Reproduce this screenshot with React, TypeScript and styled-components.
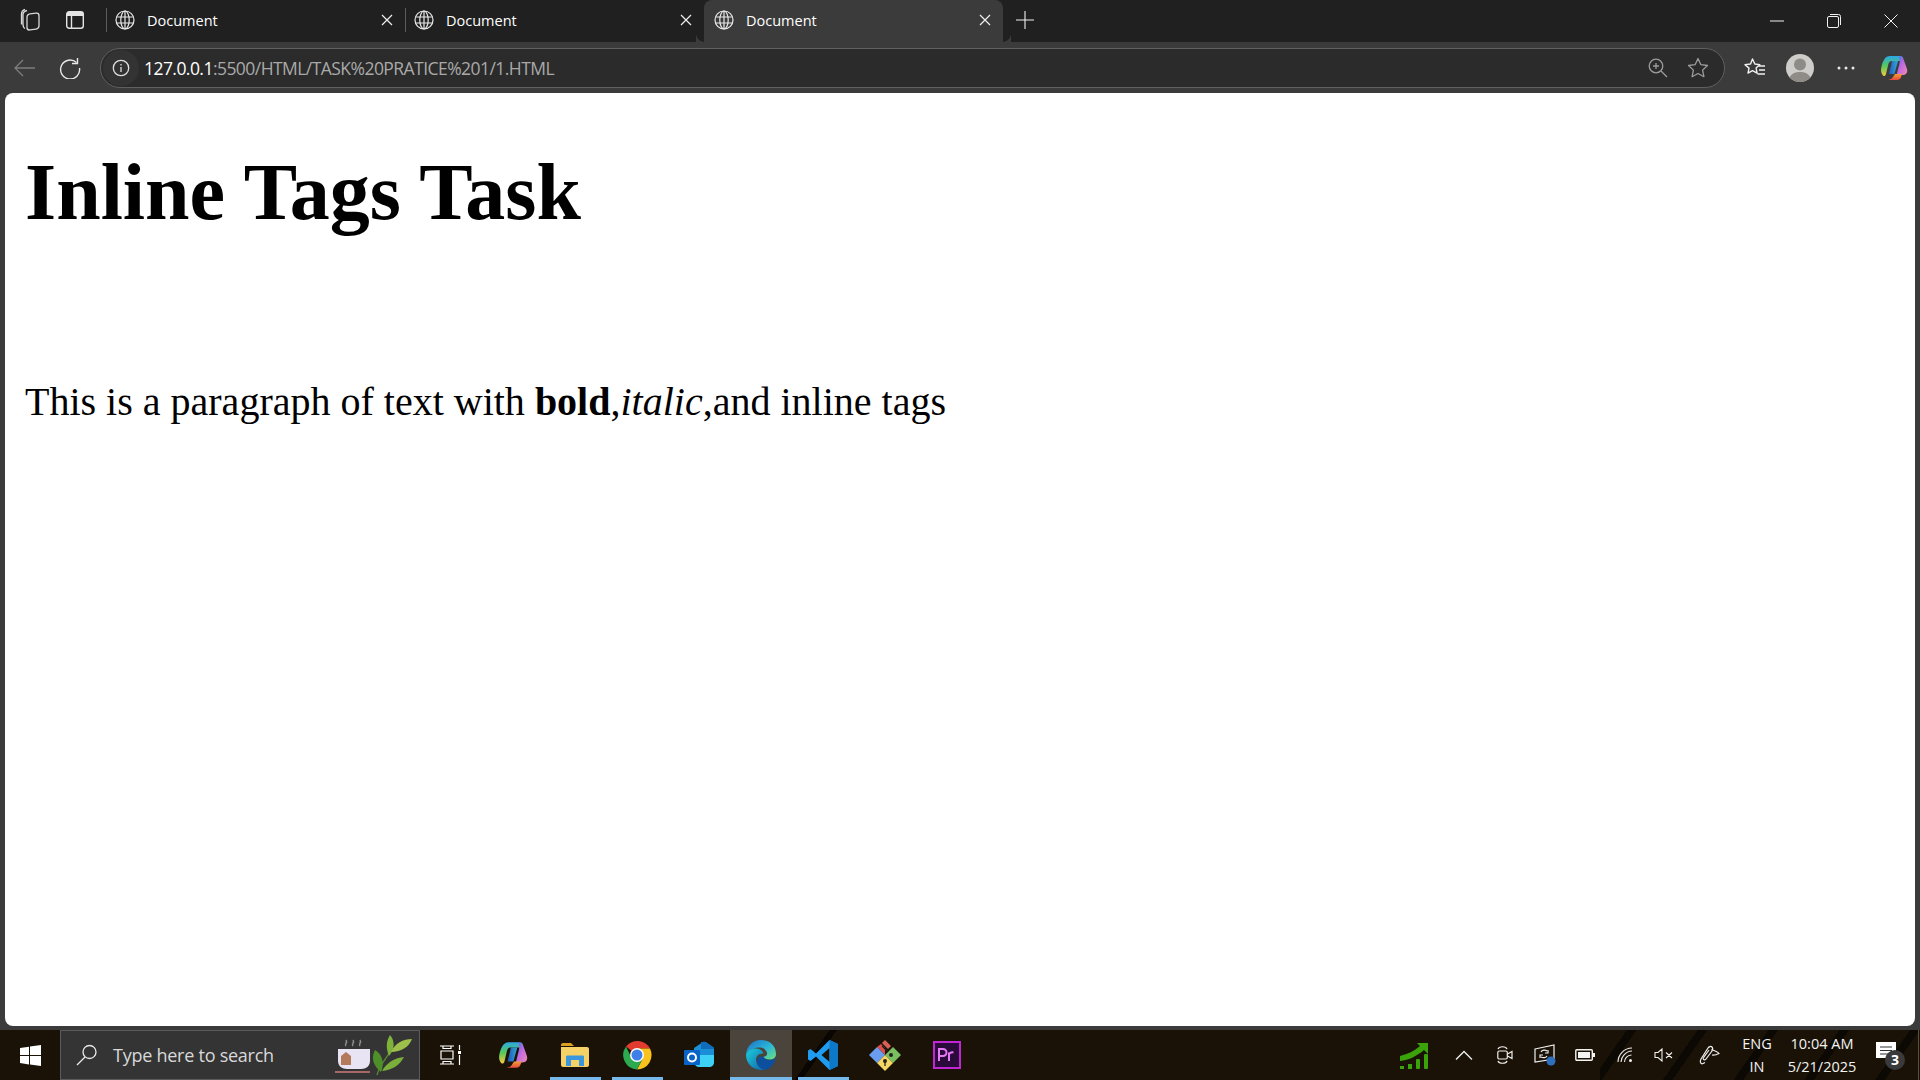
import React from "react";
import styled, { createGlobalStyle } from "styled-components";

const Global = createGlobalStyle`
  html, body { margin: 0; padding: 0; width: 1920px; height: 1080px; overflow: hidden; background: #3b3b3b; }
  * { box-sizing: border-box; }
`;
const Screen = styled.div`
  width: 1920px; height: 1080px; display: flex; flex-direction: column; background: #3b3b3b;
  font-family: "Open Sans", "Noto Sans", sans-serif; color: #fff; overflow: hidden;
`;
const TabStrip = styled.div`
  height: 42px; background: #202020; display: flex; align-items: flex-start; flex: none; padding-left: 8px;
`;
const StripButton = styled.div<{ $w: number }>`
  width: ${(p) => p.$w}px; height: 40px; display: flex; align-items: center; justify-content: center; flex: none;
`;
const Tab = styled.div<{ $active?: boolean; $sep?: boolean }>`
  position: relative; width: 299px; height: ${(p) => (p.$active ? 42 : 40)}px; flex: none; display: flex; align-items: center;
  padding: ${(p) => (p.$active ? "0 12px 2px 10px" : "0 12px 0 9px")};
  gap: 12px; font-size: 14.5px; color: #fff;
  background: ${(p) => (p.$active ? "#3b3b3b" : "transparent")};
  border-radius: ${(p) => (p.$active ? "8px 8px 0 0" : "0")};
  ${(p) => p.$sep && `&::before { content: ""; position: absolute; left: 0; top: 8px; bottom: 8px; width: 1px; background: #5c5c5c; }`}
  ${(p) => p.$active && `
    &::before, &::after { content: ""; position: absolute; bottom: 0; width: 8px; height: 8px; background: radial-gradient(circle at 0 0, #202020 7.5px, #3b3b3b 8px); }
    &::before { left: -8px; transform: scaleX(-1); }
    &::after { right: -8px; }
  `}
`;
const TabTitle = styled.span` flex: 1; `;
const NewTab = styled.div`
  width: 44px; height: 40px; display: flex; align-items: center; justify-content: center; flex: none;
`;
const StripSpacer = styled.div` flex: 1; `;
const WinButton = styled.div<{ $w: number }>`
  width: ${(p) => p.$w}px; height: 42px; display: flex; align-items: center; justify-content: center; flex: none;
`;
const Toolbar = styled.div`
  height: 51px; flex: none; display: flex; align-items: center; background: #3b3b3b; padding: 1px 0 0 0;
`;
const NavSlot = styled.div<{ $w: number }>`
  width: ${(p) => p.$w}px; height: 40px; display: flex; align-items: center; justify-content: center; flex: none;
`;
const AddressBar = styled.div`
  width: 1625px; height: 40px; flex: none; border: 1px solid #606060; border-radius: 20px; background: #2b2b2b;
  display: flex; align-items: center; padding: 0 6px 0 1px; margin-left: 2px; margin-right: 8px;
`;
const InfoPill = styled.div`
  width: 36px; height: 36px; border-radius: 18px; background: #333; display: flex; align-items: center; justify-content: center; flex: none; margin-left: 1px;
`;
const Url = styled.div`
  flex: 1; padding-left: 5px; font-size: 17.5px; letter-spacing: -0.55px; color: #a9a9a9; white-space: nowrap;
`;
const UrlHost = styled.span` color: #fff; `;
const BarIcon = styled.div`
  width: 40px; height: 36px; display: flex; align-items: center; justify-content: center; flex: none;
`;
const Viewport = styled.main`
  flex: none; height: 933px; margin: 0 5px; background: #fff; border-radius: 8px; overflow: hidden;
  color: #000; font-family: "Liberation Serif", "Times New Roman", serif; padding: 0 20px; display: flow-root;
`;
const Heading = styled.h1`
  font-size: 80px; font-weight: bold; margin: 53.6px 0;
`;
const Paragraph = styled.p`
  font-size: 40px; margin: 140px 0 40px;
`;
const Taskbar = styled.footer`
  margin-top: 4px; height: 50px; flex: none; display: flex; align-items: stretch; color: #fff;
  background:
    linear-gradient(128deg, transparent 0 86%, rgba(0,0,0,.0) 86%),
    repeating-linear-gradient(125deg, rgba(0,0,0,0) 0 22px, rgba(0,0,0,.55) 22px 30px, rgba(0,0,0,0) 30px 58px) 1600px 0 / 320px 50px no-repeat,
    repeating-linear-gradient(125deg, rgba(0,0,0,0) 0 30px, rgba(0,0,0,.7) 30px 36px, rgba(0,0,0,0) 36px 70px) 793px 0 / 70px 50px no-repeat,
    #1a1206;
`;
const StartSlot = styled.div`
  width: 60px; flex: none; display: flex; align-items: center; justify-content: center;
`;
const SearchBox = styled.div`
  width: 360px; flex: none; background: #343434; border: 1px solid #5b5b5b; display: flex; align-items: center; padding-left: 15px;
`;
const SearchText = styled.span`
  font-size: 18px; color: #d8d8d8; margin-left: 15px; letter-spacing: -0.25px; flex: 1; white-space: nowrap;
`;
const TaskItem = styled.div<{ $active?: boolean; $open?: boolean }>`
  position: relative; width: 62px; flex: none; display: flex; align-items: center; justify-content: center;
  background: ${(p) => (p.$active ? "#4a443c" : "transparent")};
  ${(p) => p.$open && `&::after { content: ""; position: absolute; bottom: 0; height: 3px; left: ${p.$active ? 0 : 6}px; right: ${p.$active ? 0 : 5}px; background: #76b9ed; }`}
`;
const TaskSpacer = styled.div` flex: 1; `;
const TrayItem = styled.div<{ $w: number }>`
  width: ${(p) => p.$w}px; flex: none; display: flex; align-items: center; justify-content: center;
`;
const TrayStack = styled.div<{ $w: number }>`
  width: ${(p) => p.$w}px; flex: none; display: flex; flex-direction: column; align-items: center; justify-content: center;
  gap: 3px; font-size: 14.5px; line-height: 20px; color: #f2f2f2; white-space: nowrap;
`;
const ShowDesktop = styled.div`
  width: 1px; margin-left: 4px; margin-right: 1px; background: #5a5040; flex: none;
`;

const S = { fill: "none", stroke: "currentColor", strokeWidth: 1.3 } as const;

const Globe = () => (
  <svg width="20" height="20" viewBox="0 0 20 20" fill="none" stroke="#e8e8e8" strokeWidth="1.2">
    <circle cx="10" cy="10" r="9" />
    <ellipse cx="10" cy="10" rx="4.2" ry="9" />
    <path d="M10 1v18M1.6 7h16.8M1.6 13h16.8" />
  </svg>
);
const CloseX = ({ s = 12 }: { s?: number }) => (
  <svg width={s} height={s} viewBox="0 0 12 12" stroke="#f0f0f0" strokeWidth="1.2"><path d="M1 1l10 10M11 1L1 11" /></svg>
);
const Copilot = ({ s = 28 }: { s?: number }) => (
  <svg width={s} height={s} viewBox="0 0 28 28">
    <defs>
      <linearGradient id="cp1" x1="0" y1="0" x2="0" y2="1"><stop offset="0" stopColor="#2aa8e8" /><stop offset=".5" stopColor="#58c85a" /><stop offset="1" stopColor="#f7c93e" /></linearGradient>
      <linearGradient id="cp2" x1="0" y1="0" x2="1" y2="1"><stop offset="0" stopColor="#3f6fe0" /><stop offset=".5" stopColor="#c56ae0" /><stop offset="1" stopColor="#f08ab0" /></linearGradient>
      <linearGradient id="cp3" x1="0" y1="0" x2="0" y2="1"><stop offset="0" stopColor="#f0a030" /><stop offset="1" stopColor="#e8483c" /></linearGradient>
      <linearGradient id="cp4" x1="0" y1="0" x2="1" y2="0"><stop offset="0" stopColor="#1b5fd0" /><stop offset="1" stopColor="#36b5e8" /></linearGradient>
    </defs>
    <path d="M10 2h10c2 0 3 1 3.4 2.6L20 7H12c-2 0-3 1-3.6 3L6 20c-.5 2-2 2.6-3 1.4C.8 19 .6 16 1.6 12 3 7 5 2 10 2z" fill="url(#cp1)" />
    <path d="M19 2.4c2.2-.6 3.8.6 4.6 3L27 15c1 3.6-1 6-4 6h-6.4l3-12c.4-2.400-.2-4.800-.6-6.600z" fill="url(#cp2)" />
    <path d="M8 26h9c2.500 0 3.600-1.500 4.200-3.500L22 20h-7l-2 3c-1 1.800-3 2.600-5 3z" fill="url(#cp3)" />
    <path d="M12 7h6l-3.600 13H9z" fill="url(#cp4)" opacity=".9" />
  </svg>
);

export default function App() {
  return (
    <Screen>
      <Global />
      <TabStrip>
        <StripButton $w={44}>
          <svg width="22" height="24" viewBox="0 0 22 24" {...S} stroke="#d8d8d8">
            <rect x="8" y="5" width="12" height="16" rx="3" transform="skewY(-8) translate(0 2.500)" />
            <path d="M6 20.500C4 19.500 4 18 4 16V6.500C4 4.500 6 3 8 2.500M2.500 16.500V6C2.500 4 4 2 6 1.300" />
          </svg>
        </StripButton>
        <StripButton $w={45}>
          <svg width="18" height="18" viewBox="0 0 18 18" fill="none" stroke="#e4e4e4" strokeWidth="1.4">
            <rect x=".7" y=".7" width="16.600" height="16.600" rx="2.500" />
            <path d="M1 1h16v4H1z" fill="#e4e4e4" stroke="none" />
            <path d="M5.500 5v12" />
          </svg>
        </StripButton>
        <StripButton $w={9} />
        <Tab $sep><Globe /><TabTitle>Document</TabTitle><CloseX /></Tab>
        <Tab $sep><Globe /><TabTitle>Document</TabTitle><CloseX /></Tab>
        <Tab $active><Globe /><TabTitle>Document</TabTitle><CloseX /></Tab>
        <NewTab>
          <svg width="18" height="18" viewBox="0 0 18 18" stroke="#f0f0f0" strokeWidth="1.1"><path d="M9 0v18M0 9h18" /></svg>
        </NewTab>
        <StripSpacer />
        <WinButton $w={57}>
          <svg width="14" height="2" viewBox="0 0 14 2"><path d="M0 1h14" stroke="#f0f0f0" strokeWidth="1" /></svg>
        </WinButton>
        <WinButton $w={57}>
          <svg width="14" height="14" viewBox="0 0 14 14" fill="none" stroke="#f0f0f0" strokeWidth="1"><rect x=".5" y="2.500" width="11" height="11" rx="1.500" /><path d="M3 .5h8.500a2 2 0 0 1 2 2V11" /></svg>
        </WinButton>
        <WinButton $w={58}>
          <svg width="14" height="14" viewBox="0 0 14 14" stroke="#f0f0f0" strokeWidth="1"><path d="M.5.5l13 13M13.500.5l-13 13" /></svg>
        </WinButton>
      </TabStrip>
      <Toolbar>
        <NavSlot $w={50}>
          <svg width="22" height="18" viewBox="0 0 22 18" fill="none" stroke="#7d7d7d" strokeWidth="1.300"><path d="M21 9H1M9 1L1 9l8 8" /></svg>
        </NavSlot>
        <NavSlot $w={40}>
          <svg width="22" height="22" viewBox="0 0 22 22" fill="none" stroke="#e8e8e8" strokeWidth="1.400"><path d="M17.500 5.500A9.500 9.500 0 1 0 20.500 11" /><path d="M18.500 1v5.500H13" /></svg>
        </NavSlot>
        <NavSlot $w={8} />
        <AddressBar>
          <InfoPill>
            <svg width="18" height="18" viewBox="0 0 18 18" fill="none" stroke="#e0e0e0" strokeWidth="1.300"><circle cx="9" cy="9" r="7.700" /><path d="M9 8v5M9 5v1.400" /></svg>
          </InfoPill>
          <Url><UrlHost>127.0.0.1</UrlHost>:5500/HTML/TASK%20PRATICE%201/1.HTML</Url>
          <BarIcon>
            <svg width="20" height="20" viewBox="0 0 20 20" fill="none" stroke="#9c9c9c" strokeWidth="1.300"><circle cx="8" cy="8" r="6.800" /><path d="M13 13l6 6M8 5v6M5 8h6" /></svg>
          </BarIcon>
          <BarIcon>
            <svg width="22" height="22" viewBox="0 0 22 22" fill="none" stroke="#9c9c9c" strokeWidth="1.300" strokeLinejoin="round"><path d="M11 1.500l2.900 6.200 6.600.8-4.900 4.600 1.300 6.600L11 16.500l-5.900 3.200 1.300-6.600L1.500 8.500l6.600-.8z" /></svg>
          </BarIcon>
        </AddressBar>
        <NavSlot $w={44}>
          <svg width="22" height="22" viewBox="0 0 22 22" fill="none" stroke="#f0f0f0" strokeWidth="1.400" strokeLinejoin="round"><path d="M8.500 2l2.300 5 5 .6-3.700 3.500 1 5-4.600-2.500-4.500 2.500 1-5L1 7.600l5.500-.6zM14 9h7M15 13h6M13.500 17H21" /></svg>
        </NavSlot>
        <NavSlot $w={46}>
          <svg width="28" height="28" viewBox="0 0 28 28"><circle cx="14" cy="14" r="14" fill="#cfcdca" /><circle cx="14" cy="10.500" r="6" fill="#8f8b87" /><path d="M3.500 23.500C6 19 10 18 14 18s8 1 10.500 5.500A14 14 0 0 1 14 28 14 14 0 0 1 3.500 23.500z" fill="#8f8b87" /></svg>
        </NavSlot>
        <NavSlot $w={46}>
          <svg width="18" height="4" viewBox="0 0 18 4" fill="#e8e8e8"><circle cx="2" cy="2" r="1.500" /><circle cx="9" cy="2" r="1.500" /><circle cx="16" cy="2" r="1.500" /></svg>
        </NavSlot>
        <NavSlot $w={50}><Copilot /></NavSlot>
      </Toolbar>
      <Viewport>
        <Heading>Inline Tags Task</Heading>
        <Paragraph>This is a paragraph of text with <b>bold</b>,<i>italic</i>,and inline tags</Paragraph>
      </Viewport>
      <Taskbar>
        <StartSlot>
          <svg width="21" height="21" viewBox="0 0 21 21" fill="#fff"><path d="M0 3l9-1.300V10H0zM10 1.500L21 0v10H10zM0 11h9v8.400L0 18zM10 11h11v10l-11-1.500z" /></svg>
        </StartSlot>
        <SearchBox>
          <svg width="22" height="22" viewBox="0 0 22 22" fill="none" stroke="#e8e8e8" strokeWidth="1.300"><circle cx="13.500" cy="8" r="6.500" /><path d="M9 13l-8 8" /></svg>
          <SearchText>Type here to search</SearchText>
          <svg width="36" height="38" viewBox="0 0 36 38" fill="none">
            <path d="M11 10c-2-2 2-3 0-6M18 10c-2-2 2-3 0-6M25 10c-2-2 2-3 0-6" stroke="#8d8d8d" strokeWidth="1.500" />
            <path d="M3 13h32v12c0 5-4 8-9 8H12c-5 0-9-3-9-8z" fill="#e9e4f4" />
            <path d="M6 20l5-4 5 4v9H6z" fill="#b47a5c" />
            <path d="M0 35h35v2H0z" fill="#a86868" />
          </svg>
          <svg width="42" height="42" viewBox="0 0 42 42" fill="#6da82e">
            <path d="M6 41C9 30 16 24 20 16" stroke="#5d9030" strokeWidth="1.200" fill="none" />
            <path d="M10 38C0 30 1 22 4 16c7 4 10 13 6 22z" fill="#4f8f2a" />
            <path d="M18 22C14 12 16 6 19 1c5 6 5 14-1 21z" fill="#7fb23a" />
            <path d="M20 18C24 9 32 5 41 5c-3 8-11 13-21 13z" fill="#9cc04a" />
            <path d="M11 37C16 28 24 24 33 23c-4 8-12 13-22 14z" fill="#7ab03a" />
          </svg>
          <TrayItem $w={6} />
        </SearchBox>
        <TaskItem>
          <svg width="22" height="20" viewBox="0 0 22 20" fill="none" stroke="#fff" strokeWidth="1.200"><path d="M0 1h14M3 1v2.500h8V1M1 6h12v8H1zM0 19h14M3 19v-2.500h8V19M19.500 0v5M19.500 10v10" /><rect x="18" y="6" width="3" height="3" fill="#fff" stroke="none" /></svg>
        </TaskItem>
        <TaskItem><Copilot s={30} /></TaskItem>
        <TaskItem $open>
          <svg width="28" height="24" viewBox="0 0 28 24"><path d="M0 2c0-1 .5-2 2-2h8l3 3h-13z" fill="#d9a021" /><path d="M0 4h26c1 0 2 .7 2 2v16c0 1.300-1 2-2 2H2c-1 0-2-.7-2-2z" fill="#f6d165" /><path d="M5 23v-9c0-1 .5-1.500 1.500-1.500h15c1 0 1.500.5 1.500 1.500v9h-5v-6h-8v6z" fill="#3a96dd" /></svg>
        </TaskItem>
        <TaskItem $open>
          <svg width="30" height="30" viewBox="0 0 30 30"><path d="M15 15L4 6.500A14.500 14.500 0 0 1 28 8.500H15z" fill="#e33b2e" /><path d="M15 8.500h13A14.500 14.500 0 0 1 15 29.500L21 18z" fill="#f9c21c" /><path d="M21 18l-6 11.500A14.500 14.500 0 0 1 4 6.500L9.500 18z" fill="#2da94f" /><circle cx="15" cy="15" r="7" fill="#fff" /><circle cx="15" cy="15" r="5.500" fill="#3f7fe8" /></svg>
        </TaskItem>
        <TaskItem>
          <svg width="30" height="28" viewBox="0 0 30 28"><path d="M10 7l9-6c1-.6 2-.4 3 .2l7 4.800c.7.500 1 1 1 2v12c0 3-2 5-5 5H15c-3 0-5-2-5-5z" fill="#1a8fd8" /><path d="M17 1h4c.500 0 1 .200 1.300.400L29 6c.6.400 1 1 1 2H17z" fill="#0f6cbd" /><path d="M12 14h18v7c0 3-2 5-5 5H15c-2 0-3.500-1-4-2.500z" fill="#3dd2f5" /><rect x="0" y="9" width="16" height="15" rx="1" fill="#0a64c8" /><circle cx="8" cy="16.500" r="4" fill="none" stroke="#fff" strokeWidth="2" /></svg>
        </TaskItem>
        <TaskItem $active $open>
          <svg width="30" height="30" viewBox="0 0 30 30">
            <defs>
              <linearGradient id="ed1" x1="0" y1="0" x2="1" y2="1"><stop offset="0" stopColor="#1a6fc4" /><stop offset=".55" stopColor="#2bb6d8" /><stop offset="1" stopColor="#6fe07a" /></linearGradient>
              <linearGradient id="ed2" x1="0" y1="0" x2="1" y2="1"><stop offset="0" stopColor="#1dd0d8" /><stop offset="1" stopColor="#0d62b0" /></linearGradient>
            </defs>
            <path d="M15 0C24 0 30 6 30 14c0 4-3 5.500-6 5.500-4 0-6-1-6.500-3 3 0 4.500-2 3-5C18.500 8 15.500 7 12 7.500 7 8.200 1.500 11 0 16 0 7 6 0 15 0z" fill="url(#ed1)" />
            <path d="M0 15c2-5 7-7 11-6.500 3 .4 6 2.500 6.500 5-4 0-7.500 2-7.500 6 0 5 4 9 9 10.500C9 31 0 25 0 15z" fill="url(#ed2)" />
            <path d="M11 21c0-3 2-5 6.500-4.500C18 19 21 20 24 20c3 0 5-1 5.800-2.500C29 24 24 29 19.500 29.800 14 29 11 25 11 21z" fill="#0b4f9e" />
          </svg>
        </TaskItem>
        <TaskItem $open>
          <svg width="30" height="30" viewBox="0 0 30 30"><path d="M21.500 0L30 4v22l-8.500 4L8 16.500 2.500 21 0 19.500V10.500L2.500 9 8 13.500zM21.500 8l-8 7 8 7z" fill="#1f9cf0" /><path d="M21.500 0L30 4v22l-8.500 4z" fill="#0e78c8" /></svg>
        </TaskItem>
        <TaskItem>
          <svg width="32" height="32" viewBox="0 0 32 32"><path d="M16 16L8 8l4-3 4 4z" fill="#e0504a" /><path d="M13 4l3-3 6 6-3 3z" fill="#d96058" /><path d="M16 16l8-8 8 8-8 8z" fill="#7ac060" /><path d="M16 16l-8-8-8 8 8 8z" fill="#6a9cf0" /><path d="M16 16l8 8-8 8-8-8z" fill="#f4d664" /><circle cx="16" cy="22" r="2" fill="#222" /><circle cx="22" cy="16" r="2" fill="#222" /><path d="M16 22v5M13 7l6 6" stroke="#222" strokeWidth="1.300" /></svg>
        </TaskItem>
        <TaskItem>
          <svg width="28" height="28" viewBox="0 0 28 28"><rect x="1" y="1" width="26" height="26" fill="#2a0a3a" stroke="#c026d3" strokeWidth="2" /><path d="M6 20V8h4a3.500 3.500 0 0 1 0 7H6M16 20v-8.500M16 14c0-2 2-3 4.500-2.500" fill="none" stroke="#e879f9" strokeWidth="2" /></svg>
        </TaskItem>
        <TaskSpacer />
        <TrayItem $w={60}>
          <svg width="30" height="30" viewBox="0 0 30 30" fill="#3aa30a"><rect x="1" y="26" width="4" height="3" /><rect x="9" y="24" width="4" height="5" /><rect x="17" y="19" width="4" height="10" rx="1" /><rect x="25" y="14" width="4" height="15" rx="1" /><path d="M1 16C9 14 15 11 21 6l-3-3h11v11l-4-4C18 16 10 20 1 21z" /></svg>
        </TrayItem>
        <TrayItem $w={40}>
          <svg width="18" height="10" viewBox="0 0 18 10" fill="none" stroke="#f0f0f0" strokeWidth="1.300"><path d="M1 9.500l8-8 8 8" /></svg>
        </TrayItem>
        <TrayItem $w={42}>
          <svg width="16" height="20" viewBox="0 0 16 20" fill="none" stroke="#f0f0f0" strokeWidth="1.200"><path d="M1 4c1-3 8-3 9 0M1 16c1 3 8 3 9 0" /><rect x=".8" y="6" width="9.500" height="8" rx="1.500" /><path d="M10.500 9l4.500-2.500v7L10.500 11" /></svg>
        </TrayItem>
        <TrayItem $w={38}>
          <svg width="22" height="22" viewBox="0 0 22 22" fill="none" stroke="#f0f0f0" strokeWidth="1.200"><path d="M1 5l19-4v14l-19 3z" /><path d="M7 8c1-2 4-2.500 6-1M14 6v3h-3M13 12c-1 2-4 2-6 1M6 14v-3h3" /><circle cx="17" cy="17" r="4.500" fill="#2f6fc0" stroke="none" /></svg>
        </TrayItem>
        <TrayItem $w={42}>
          <svg width="20" height="12" viewBox="0 0 20 12"><rect x=".8" y=".8" width="16.500" height="10.400" rx="1" fill="none" stroke="#f4f4f4" strokeWidth="1.400" /><rect x="3" y="3" width="12" height="6" fill="#f4f4f4" /><rect x="18" y="4" width="2" height="4" fill="#f4f4f4" /></svg>
        </TrayItem>
        <TrayItem $w={38}>
          <svg width="16" height="16" viewBox="0 0 16 16" fill="none" stroke="#f0f0f0" strokeWidth="1.100"><path d="M1 15C1 8 7 1 15 1M4 15c0-5 5-11 11-11M7.500 15c0-3 2.500-7 7-7" /><circle cx="13.500" cy="13.500" r="1.500" fill="#f0f0f0" stroke="none" /></svg>
        </TrayItem>
        <TrayItem $w={40}>
          <svg width="20" height="14" viewBox="0 0 20 14" fill="none" stroke="#f0f0f0" strokeWidth="1.100"><path d="M1 4.500h3L8 1v12L4 9.500H1zM12 4.500l6 5.500M18 4.500L12 10" /></svg>
        </TrayItem>
        <TrayItem $w={52}>
          <svg width="22" height="22" viewBox="0 0 22 22" fill="none" stroke="#f0f0f0" strokeWidth="1.200"><path d="M3 20c-2-1-2-3-1-5L9 4c1-1.500 3-2 4-1s.8 2.500 0 4L7 15c-.6 1-2 1-2.500.3-.5-.5-.3-1.500.2-2L10 6M3 20l3-1.500M12 6c3 0 7 2 8 3.500-2 1-4.500 2-7 1.500" /></svg>
        </TrayItem>
        <TrayStack $w={42}><span>ENG</span><span>IN</span></TrayStack>
        <TrayStack $w={88}><span>10:04 AM</span><span>5/21/2025</span></TrayStack>
        <TrayItem $w={48}>
          <svg width="30" height="30" viewBox="0 0 30 30"><path d="M1 2h20v16h-5l-4 5v-5H1z" fill="#fff" /><path d="M5 7h12M5 10.500h12M5 14h12" stroke="#333" strokeWidth="1.200" /><circle cx="20" cy="20" r="10" fill="#3a3a3a" /><text x="20" y="25" textAnchor="middle" fontSize="14" fontWeight="700" fill="#fff" fontFamily="Open Sans">3</text></svg>
        </TrayItem>
        <ShowDesktop />
      </Taskbar>
    </Screen>
  );
}
